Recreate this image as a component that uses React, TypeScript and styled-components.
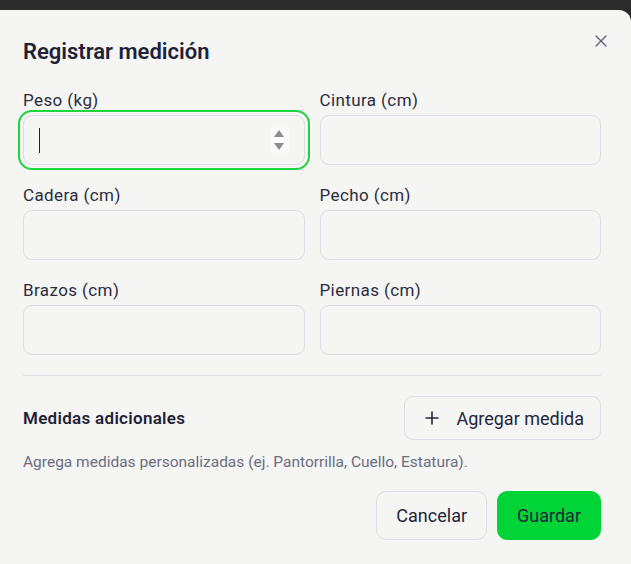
import styled, { createGlobalStyle } from "styled-components";

const GlobalStyle = createGlobalStyle`
  html, body {
    margin: 0;
    padding: 0;
    background: #2b2b2b;
    overflow: hidden;
  }
  * {
    box-sizing: border-box;
  }
`;

const fields = [
  { label: "Peso (kg)", focused: true },
  { label: "Cintura (cm)" },
  { label: "Cadera (cm)" },
  { label: "Pecho (cm)" },
  { label: "Brazos (cm)" },
  { label: "Piernas (cm)" },
];

export default function App() {
  return (
    <>
      <GlobalStyle />
      <Modal>
        <CloseButton aria-label="Cerrar">
          <svg width="12" height="12" viewBox="0 0 12 12">
            <path
              d="M1 1L11 11M11 1L1 11"
              stroke="#5f6273"
              strokeWidth="1.4"
              strokeLinecap="round"
            />
          </svg>
        </CloseButton>
        <Title>Registrar medición</Title>
        <FormGrid>
          {fields.map((f) => (
            <Field key={f.label}>
              <Label>{f.label}</Label>
              {f.focused ? (
                <FocusedBox>
                  <Caret />
                  <Spinner>
                    <svg width="12" height="26" viewBox="0 0 12 26">
                      <path d="M6 3L11 10H1Z" fill="#8c8c8c" />
                      <path d="M6 23L11 16H1Z" fill="#8c8c8c" />
                    </svg>
                  </Spinner>
                </FocusedBox>
              ) : (
                <Input type="number" />
              )}
            </Field>
          ))}
        </FormGrid>
        <Divider />
        <SectionRow>
          <SectionTitle>Medidas adicionales</SectionTitle>
          <OutlineButton>
            <svg width="14" height="14" viewBox="0 0 14 14">
              <path
                d="M7 0.5V13.5M0.5 7H13.5"
                stroke="#23263a"
                strokeWidth="1.6"
              />
            </svg>
            Agregar medida
          </OutlineButton>
        </SectionRow>
        <Helper>
          Agrega medidas personalizadas (ej. Pantorrilla, Cuello, Estatura).
        </Helper>
        <Footer>
          <FooterButton>Cancelar</FooterButton>
          <FooterButton $primary>Guardar</FooterButton>
        </Footer>
      </Modal>
    </>
  );
}

const Modal = styled.div`
  position: relative;
  margin-top: 10px;
  width: 631px;
  min-height: 554px;
  background: #f5f5f3;
  border-top-right-radius: 12px;
  padding: 28px 30px 0 23px;
  font-family: Roboto, "Liberation Sans", sans-serif;
  color: #23263a;
`;

const CloseButton = styled.button`
  position: absolute;
  top: 25px;
  right: 24px;
  width: 12px;
  height: 12px;
  padding: 0;
  border: none;
  background: none;
  display: flex;
  cursor: pointer;
`;

const Title = styled.h2`
  margin: 0;
  font-size: 22px;
  line-height: 28px;
  font-weight: 600;
  color: #1f2236;
`;

const FormGrid = styled.div`
  display: grid;
  grid-template-columns: 1fr 1fr;
  column-gap: 15px;
  row-gap: 20px;
  margin-top: 24px;
`;

const Field = styled.div`
  display: flex;
  flex-direction: column;
`;

const Label = styled.label`
  font-size: 17px;
  letter-spacing: 0.4px;
  line-height: 20px;
  color: #2a2d40;
  margin-bottom: 5px;
`;

const Input = styled.input`
  height: 50px;
  width: 100%;
  border: 1px solid #dcdde5;
  border-radius: 9px;
  background: #f5f5f3;
  font: inherit;
  outline: none;
`;

const FocusedBox = styled.div`
  height: 50px;
  border: 1px solid #dcdde5;
  border-radius: 9px;
  background: #f5f5f3;
  outline: 2px solid #1fd43f;
  outline-offset: 3px;
  display: flex;
  align-items: center;
  justify-content: space-between;
  padding: 0 15px 0 15px;
`;

const Caret = styled.span`
  width: 1px;
  height: 25px;
  background: #1f2236;
`;

const Spinner = styled.span`
  width: 19px;
  height: 26px;
  background: #fafafa;
  display: flex;
  align-items: center;
  justify-content: center;
`;

const Divider = styled.div`
  height: 1px;
  background: #e0e1e7;
  margin-top: 20px;
`;

const SectionRow = styled.div`
  display: flex;
  align-items: center;
  justify-content: space-between;
  margin-top: 20px;
`;

const SectionTitle = styled.h3`
  margin: 0;
  font-size: 17px;
  letter-spacing: 0.3px;
  font-weight: 600;
  color: #1f2236;
`;

const OutlineButton = styled.button`
  height: 44px;
  display: flex;
  align-items: center;
  gap: 17px;
  padding: 0 16px 0 20px;
  border: 1px solid #dcdde5;
  border-radius: 9px;
  background: #f5f5f3;
  font-family: inherit;
  font-size: 18px;
  color: #23263a;
  cursor: pointer;
`;

const Helper = styled.p`
  margin: 12px 0 0;
  font-size: 15.5px;
  line-height: 20px;
  color: #6b6e80;
`;

const Footer = styled.div`
  display: flex;
  justify-content: flex-end;
  gap: 10px;
  margin-top: 19px;
`;

const FooterButton = styled.button<{ $primary?: boolean }>`
  height: 49px;
  padding: 0 19px;
  border-radius: 10px;
  border: 1px solid ${(p) => (p.$primary ? "#00d436" : "#dcdde5")};
  background: ${(p) => (p.$primary ? "#00d436" : "#f5f5f3")};
  font-family: inherit;
  font-size: 18px;
  color: #23263a;
  cursor: pointer;
`;
